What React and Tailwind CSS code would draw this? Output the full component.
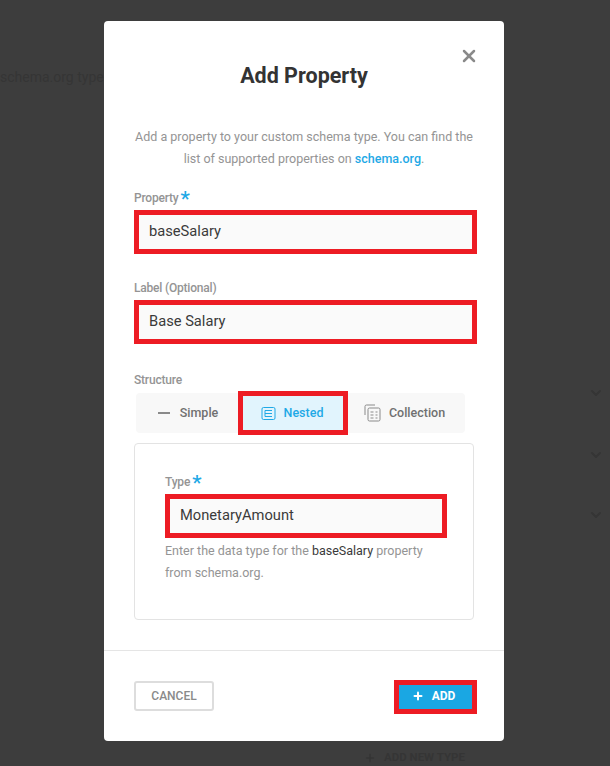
import React from "react";
import { ChevronDown, Plus, X } from "lucide-react";

function Field({ label, required, value, className = "" }) {
  return (
    <div className={className}>
      <div className="flex h-[16px] items-center text-[12px] leading-[16px] text-[#949494] font-medium tracking-[-0.2px]">
        {label}
        {required && (
          <span className="ml-[2px] mt-[2px] text-[21px] leading-[16px] text-[#1fa9e6]">*</span>
        )}
      </div>
      <div className="mt-[4px] flex h-[44px] items-center border-[5px] border-[#ed1c24] bg-[#fafafa] pb-[1px] pl-[10px] text-[14.7px] text-[#3a3a3a]">
        {value}
      </div>
    </div>
  );
}

export default function App() {
  return (
    <div className="relative h-[766px] w-[610px] overflow-hidden bg-[#3d3d3d] font-['Roboto',sans-serif]">
      {/* dimmed page behind the modal */}
      <div className="absolute left-0 top-[67px] whitespace-nowrap text-[14px] text-[#353535]">
        schema.org type w
      </div>
      <ChevronDown className="absolute left-[588px] top-[385px] text-[#353535]" size={16} strokeWidth={3} />
      <ChevronDown className="absolute left-[588px] top-[447px] text-[#353535]" size={16} strokeWidth={3} />
      <ChevronDown className="absolute left-[588px] top-[507px] text-[#353535]" size={16} strokeWidth={3} />
      <div className="absolute left-[364px] top-[749px] flex items-center gap-[8px] text-[11.5px] font-bold text-[#353535]">
        <Plus size={12} strokeWidth={3} />
        ADD NEW TYPE
      </div>

      <div className="absolute left-[104px] top-[21px] flex h-[720px] w-[400px] flex-col rounded-[4px] bg-white">
        <X className="absolute right-[25px] top-[25px] text-[#8a8a8a]" size={20} strokeWidth={3} />
        <h2 className="mt-[39px] text-center text-[21.5px] font-bold leading-[32px] text-[#333333]">
          Add Property
        </h2>
        <p className="mt-[34px] px-[30px] text-center text-[12.5px] leading-[22px] text-[#949494]">
          Add a property to your custom schema type. You can find the list of supported properties on{" "}
          <span className="font-medium text-[#1fa9e6]">schema.org</span>.
        </p>
        <div className="flex-1 pl-[30px] pr-[27px]">
          <Field label="Property" required value="baseSalary" className="mt-[20px]" />
          <Field label="Label (Optional)" value="Base Salary" className="mt-[26px]" />
          <div className="mt-[28px] h-[16px] text-[12px] leading-[16px] font-medium tracking-[-0.2px] text-[#949494]">
            Structure
          </div>
          <div className="ml-[2px] mt-[5px] flex h-[40px] w-[329px] items-center rounded-[4px] bg-[#f8f8f8] text-[12.5px] font-medium text-[#707070]">
            <div className="flex w-[102px] items-center justify-center gap-[10px] pl-[2px]">
              <span className="h-[2px] w-[12px] bg-[#8a8a8a]" />
              Simple
            </div>
            <div className="-my-[3px] flex h-[44px] w-[110px] items-center justify-center gap-[8px] border-[5px] border-[#ed1c24] bg-[#e1f4fd] pr-[2px] text-[#1fa9e6]">
              <svg width="15" height="15" viewBox="0 0 15 15" fill="none" stroke="currentColor" strokeWidth="1">
                <rect x="1" y="1.5" width="13" height="12" rx="1.5" />
                <path d="M4 4.5h7M4 7.5h7M4 10.5h7M4 4.5v6" />
              </svg>
              Nested
            </div>
            <div className="flex flex-1 items-center justify-center gap-[8px] pr-[4px]">
              <svg width="17" height="18" viewBox="0 0 17 18" fill="none" stroke="#8a8a8a" strokeWidth="1">
                <path d="M1 11V2.5A1.5 1.5 0 0 1 2.5 1H11" />
                <rect x="4" y="4" width="12" height="13" rx="1.5" />
                <path d="M6.5 8h3M6.5 11h3M6.5 14h3M11.5 8h2M11.5 11h2M11.5 14h2" />
              </svg>
              Collection
            </div>
          </div>
          <div className="mt-[10px] h-[177px] w-[340px] rounded-[4px] border border-[#e3e3e3] px-[30px] pt-[30px]">
            <Field label="Type" required value="MonetaryAmount" className="w-[282px]" />
            <p className="mt-[2px] text-[12.5px] leading-[22px] text-[#949494]">
              Enter the data type for the <span className="font-[450] text-[#3a3a3a]">baseSalary</span> property
              from schema.org.
            </p>
          </div>
        </div>
        <div className="flex h-[91px] items-start justify-between border-t border-[#e5e5e5] pl-[30px] pr-[27px] pt-[29px]">
          <button className="mt-[1px] h-[30px] w-[80px] rounded-[3px] border-2 border-[#dddddd] text-[12px] font-medium text-[#8a8a8a]">
            CANCEL
          </button>
          <button className="flex h-[34px] w-[83px] items-center justify-center gap-[8px] border-[5px] border-[#ed1c24] bg-[#1aa7e3] pb-[2px] pr-[4px] text-[12px] font-bold text-white">
            <Plus size={12} strokeWidth={4} />
            ADD
          </button>
        </div>
      </div>
    </div>
  );
}
